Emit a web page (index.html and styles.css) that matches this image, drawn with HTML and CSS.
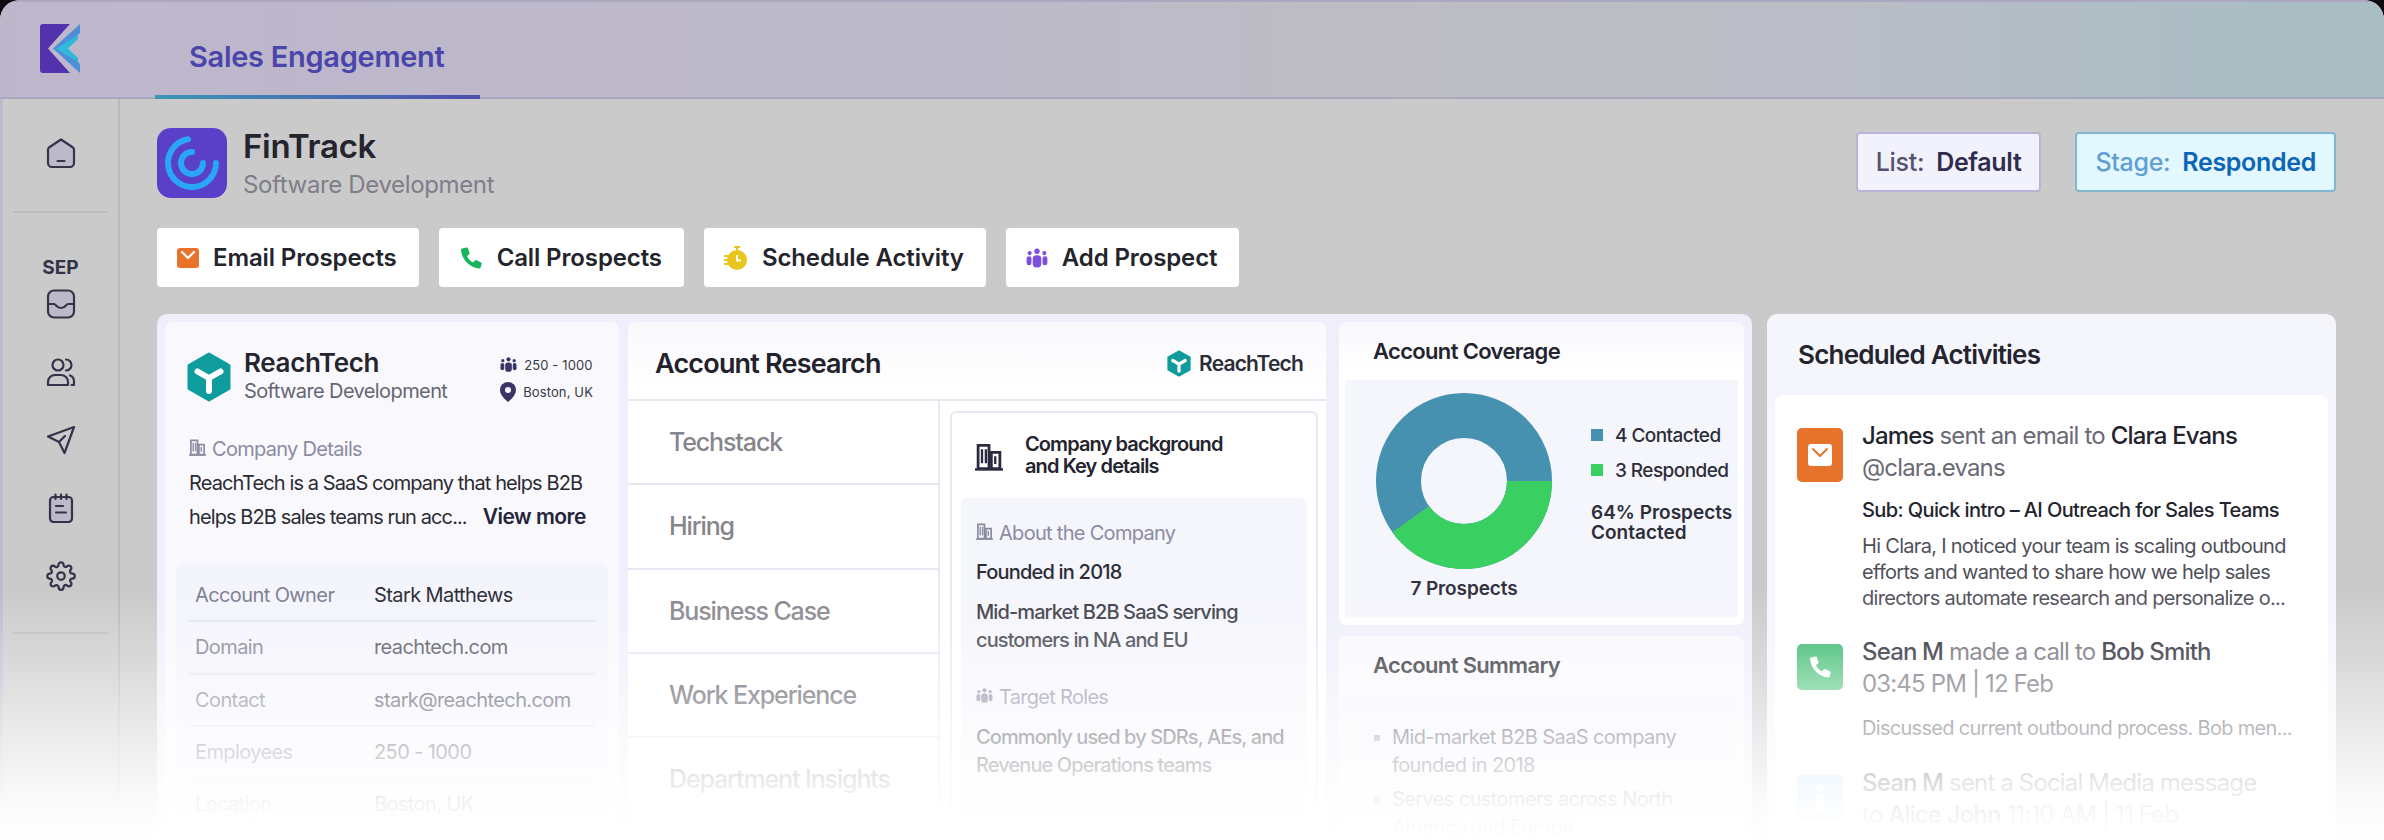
FILE: index.html
```html
<!DOCTYPE html>
<html lang="en">
<head>
<meta charset="utf-8">
<title>Sales Engagement</title>
<link rel="stylesheet" href="styles.css">
</head>
<body>
<svg class="defs" width="0" height="0">
  <symbol id="hex" viewBox="0 0 44 50">
    <polygon points="22,2 42,13.5 42,36.5 22,48 2,36.5 2,13.5" fill="#0f9c9c" stroke="#0f9c9c" stroke-width="3" stroke-linejoin="round"/>
    <path d="M22 26 10.5 19.5M22 26l11.5-6.500M22 26v13" stroke="#fff" stroke-width="6" stroke-linecap="round" fill="none"/>
  </symbol>
  <symbol id="bld" viewBox="0 0 18 18">
    <path d="M2 1.500h7v15H2zM10.500 6H16v10.500h-5.500z" fill="none" stroke="currentColor" stroke-width="1.800"/>
    <path d="M4.500 4v9M7 4v9M13 8.500v5" stroke="currentColor" stroke-width="1.500"/>
    <path d="M0 17h18" stroke="currentColor" stroke-width="1.600"/>
  </symbol>
  <symbol id="team" viewBox="0 0 18 18">
    <circle cx="9" cy="3.500" r="2.200"/><circle cx="3" cy="5" r="1.700"/><circle cx="15" cy="5" r="1.700"/>
    <rect x="5.500" y="6.800" width="7" height="10" rx="3"/><rect x="0.500" y="7.500" width="4" height="7.500" rx="2"/><rect x="13.500" y="7.500" width="4" height="7.500" rx="2"/>
  </symbol>
  <symbol id="mail" viewBox="0 0 22 20">
    <rect width="22" height="20" rx="3" fill="currentColor"/>
    <path d="M5 4l6 6 6-6" fill="none" stroke="#fff" stroke-width="2.200" stroke-linecap="round" stroke-linejoin="round"/>
  </symbol>
  <symbol id="phone" viewBox="0 0 24 24">
    <path d="M3 2.500 7.500 1.500c.8-.2 1.300.2 1.500.9l1.500 4.500c.2.700 0 1.200-.5 1.600L8 10c1.200 2.700 3.300 5 6 6.500l1.800-1.900c.5-.5 1.100-.6 1.700-.3l4.300 2c.7.300 1 .9.800 1.600l-1 3.600c-.2.700-.8 1.100-1.500 1C10.500 21.600 2.800 13.500 2 4c-.1-.7.300-1.300 1-1.500z"/>
  </symbol>
</svg>

<div class="app">
  <header class="topbar">
    <div class="brand">
      <svg class="logo" width="40" height="50" viewBox="0 0 40 50">
        <path d="M3 0h27L8 24.500 30 49H3a3 3 0 0 1-3-3V3a3 3 0 0 1 3-3z" fill="#5233ad"/>
        <path d="M40 0v9L24 24.500 40 40v9L13 24.500z" fill="#4b8fd6"/>
        <path d="M38 11v4L28 24.500 38 34v4L16 24.500z" fill="#2fb8da"/>
      </svg>
    </div>
    <div class="tab">Sales Engagement</div>
  </header>

  <div class="shell">
    <nav class="side">
      <svg class="nav-ico nav-home" viewBox="0 0 30 30" width="30" height="30"><path d="M15 1.500 27 9.500a3 3 0 0 1 1 2.300V25a4 4 0 0 1-4 4H6a4 4 0 0 1-4-4V11.800a3 3 0 0 1 1-2.300z" class="ico-fill"/><path d="M11.500 23h7" class="ico-line"/></svg>
      <div class="side-rule"></div>
      <div class="side-label">SEP</div>
      <svg class="nav-ico" viewBox="0 0 30 30" width="30" height="30"><rect x="2" y="1.500" width="26" height="27" rx="6" class="ico-fill"/><path d="M2 15h6c2 0 2.500 4 7 4s5-4 7-4h6" class="ico-line"/></svg>
      <svg class="nav-ico" viewBox="0 0 30 30" width="30" height="30"><circle cx="12" cy="8" r="5.500" class="ico-line"/><path d="M20 2.500a5.500 5.500 0 0 1 0 11M2 28v-3a7 7 0 0 1 7-7h6a7 7 0 0 1 7 7v3zM24 18.500c2.500.8 4 3 4 6V28h-2.500" class="ico-line"/></svg>
      <svg class="nav-ico" viewBox="0 0 30 30" width="30" height="30"><path d="M28 2 2 11.500l11 5.500 5.500 11zM13 17l6-6" class="ico-line"/></svg>
      <svg class="nav-ico" viewBox="0 0 30 30" width="30" height="30"><rect x="4" y="4" width="22" height="25" rx="3.500" class="ico-fill"/><path d="M9.500 1.500V6M15 1.500V6M20.500 1.500V6M10 13h7M10 19.500h10" class="ico-line"/></svg>
      <svg class="nav-ico" viewBox="0 0 24 24" width="30" height="30"><circle cx="12" cy="12" r="3" class="ico-thin"/><path class="ico-thin" d="M19.400 15a1.650 1.650 0 0 0 .33 1.820l.06.06a2 2 0 0 1 0 2.830 2 2 0 0 1-2.830 0l-.06-.06a1.650 1.650 0 0 0-1.820-.33 1.650 1.650 0 0 0-1 1.510V21a2 2 0 0 1-2 2 2 2 0 0 1-2-2v-.09A1.650 1.650 0 0 0 9 19.400a1.650 1.650 0 0 0-1.820.33l-.06.06a2 2 0 0 1-2.830 0 2 2 0 0 1 0-2.830l.06-.06a1.650 1.650 0 0 0 .33-1.820 1.650 1.650 0 0 0-1.510-1H3a2 2 0 0 1-2-2 2 2 0 0 1 2-2h.09A1.650 1.650 0 0 0 4.600 9a1.650 1.650 0 0 0-.33-1.820l-.06-.06a2 2 0 0 1 0-2.830 2 2 0 0 1 2.830 0l.06.06a1.650 1.650 0 0 0 1.820.33H9a1.650 1.650 0 0 0 1-1.510V3a2 2 0 0 1 2-2 2 2 0 0 1 2 2v.09a1.650 1.650 0 0 0 1 1.510 1.650 1.650 0 0 0 1.820-.33l.06-.06a2 2 0 0 1 2.830 0 2 2 0 0 1 0 2.830l-.06.06a1.650 1.650 0 0 0-.33 1.820V9a1.650 1.650 0 0 0 1.510 1H21a2 2 0 0 1 2 2 2 2 0 0 1-2 2h-.09a1.650 1.650 0 0 0-1.510 1z"/></svg>
      <div class="side-rule side-rule-low"></div>
    </nav>

    <main class="main">
      <div class="title-row">
        <svg width="70" height="70" viewBox="0 0 70 70"><rect width="70" height="70" rx="14" fill="#5a3fc8"/><path d="M31 11.300A24 24 0 1 0 59 35M35 24a11 11 0 1 0 11 11" fill="none" stroke="#2aa6f6" stroke-width="6" stroke-linecap="round"/></svg>
        <div class="title-text">
          <div class="title-name">FinTrack</div>
          <div class="title-sub">Software Development</div>
        </div>
        <div class="chips">
          <div class="chip"><span class="chip-k">List:</span><span class="chip-v">Default</span></div>
          <div class="chip chip-blue"><span class="chip-k">Stage:</span><span class="chip-v">Responded</span></div>
        </div>
      </div>

      <div class="actions">
        <div class="btn"><svg class="ico-mail" width="22" height="20"><use href="#mail"/></svg>Email Prospects</div>
        <div class="btn"><svg class="ico-phone" width="24" height="24"><use href="#phone"/></svg>Call Prospects</div>
        <div class="btn">
          <svg width="24" height="26" viewBox="0 0 24 26"><circle cx="13" cy="15" r="10" fill="#e8c51f"/><path d="M10 2h6M13 2v3M13 10v5.500h4" stroke="#e8c51f" stroke-width="2.200" fill="none"/><path d="M13 10v5.500h4" stroke="#fff" stroke-width="1.800" fill="none"/><path d="M0 11h4M0 15h3M0 19h4" stroke="#e8c51f" stroke-width="2"/></svg>
          Schedule Activity
        </div>
        <div class="btn"><svg class="ico-team" width="22" height="22"><use href="#team"/></svg>Add Prospect</div>
      </div>

      <div class="boards">
        <section class="board board-main">
          <article class="card company">
            <div class="co-head">
              <svg width="44" height="50"><use href="#hex"/></svg>
              <div class="co-name">
                <div class="co-title">ReachTech</div>
                <div class="co-sub">Software Development</div>
              </div>
              <div class="co-meta">
                <div class="meta-row"><svg class="ico-navy" width="17" height="17"><use href="#team"/></svg><span>250 - 1000</span></div>
                <div class="meta-row"><svg width="16" height="20" viewBox="0 0 16 20"><path d="M8 0a8 8 0 0 1 8 8c0 5-5 9.500-8 12C5 17.500 0 13 0 8a8 8 0 0 1 8-8z" fill="#3a3566"/><circle cx="8" cy="8" r="3" fill="#f8f8fd"/></svg><span>Boston, UK</span></div>
              </div>
            </div>
            <div class="label co-label"><svg width="17" height="17"><use href="#bld"/></svg>Company Details</div>
            <div class="co-desc">ReachTech is a SaaS company that helps B2B<br>helps B2B sales teams run acc...<b class="more">View more</b></div>
            <div class="facts">
              <div class="fact"><span class="fact-k">Account Owner</span><span class="fact-v strong">Stark Matthews</span></div>
              <div class="fact"><span class="fact-k">Domain</span><span class="fact-v">reachtech.com</span></div>
              <div class="fact"><span class="fact-k">Contact</span><span class="fact-v">stark@reachtech.com</span></div>
              <div class="fact"><span class="fact-k">Employees</span><span class="fact-v">250 - 1000</span></div>
              <div class="fact"><span class="fact-k">Location</span><span class="fact-v">Boston, UK</span></div>
            </div>
          </article>

          <article class="card research">
            <div class="res-head">
              <h2 class="res-title">Account Research</h2>
              <div class="res-brand"><svg width="24" height="27"><use href="#hex"/></svg>ReachTech</div>
            </div>
            <div class="res-body">
              <div class="res-tabs">
                <div class="res-tab">Techstack</div>
                <div class="res-tab">Hiring</div>
                <div class="res-tab">Business Case</div>
                <div class="res-tab res-tab-dark">Work Experience</div>
                <div class="res-tab">Department Insights</div>
              </div>
              <div class="res-pane">
                <div class="res-detail">
                  <div class="det-head">
                    <svg class="det-ico" width="30" height="28"><use href="#bld"/></svg>
                    <div class="det-title">Company background<br>and Key details</div>
                  </div>
                  <div class="det-panel">
                    <div class="label"><svg width="17" height="17"><use href="#bld"/></svg>About the Company</div>
                    <p class="det-one">Founded in 2018</p>
                    <p class="det-text">Mid-market B2B SaaS serving<br>customers in NA and EU</p>
                    <div class="label det-gap"><svg width="17" height="17"><use href="#team"/></svg>Target Roles</div>
                    <p class="det-text">Commonly used by SDRs, AEs, and<br>Revenue Operations teams</p>
                  </div>
                </div>
              </div>
            </div>
          </article>

          <div class="col">
            <article class="card coverage">
              <h3 class="col-title">Account Coverage</h3>
              <div class="cov-panel">
                <div class="cov-chart">
                  <svg width="176" height="176" viewBox="0 0 176 176">
                    <circle cx="88" cy="88" r="65.500" fill="none" stroke="#4690b0" stroke-width="45"/>
                    <path d="M153.500 88A65.500 65.500 0 0 1 34.700 126.100" fill="none" stroke="#3ad061" stroke-width="45"/>
                  </svg>
                  <div class="cov-total">7 Prospects</div>
                </div>
                <div class="cov-legend">
                  <div class="leg"><i class="sq sq-blue"></i>4 Contacted</div>
                  <div class="leg"><i class="sq sq-green"></i>3 Responded</div>
                  <div class="cov-stat">64% Prospects<br>Contacted</div>
                </div>
              </div>
            </article>
            <article class="card summary">
              <h3 class="col-title">Account Summary</h3>
              <ul class="sum-panel">
                <li class="sum-item"><span>Mid-market B2B SaaS company<br>founded in 2018</span></li>
                <li class="sum-item"><span>Serves customers across North<br>America and Europe</span></li>
              </ul>
            </article>
          </div>
        </section>

        <section class="board board-side">
          <h2 class="sch-title">Scheduled Activities</h2>
          <div class="sch-list">
            <div class="act">
              <div class="act-ico act-orange"><svg class="ico-white" width="24" height="22" viewBox="0 0 24 22"><rect width="24" height="22" rx="3" fill="#fff"/><path d="M5 5l7 7 7-7" fill="none" stroke="#e7722c" stroke-width="2" stroke-linecap="round" stroke-linejoin="round"/></svg></div>
              <div class="act-body">
                <div class="act-line"><b>James</b> sent an email to <b>Clara Evans</b><br>@clara.evans</div>
                <div class="act-sub">Sub: Quick intro – AI Outreach for Sales Teams</div>
                <div class="act-text">Hi Clara, I noticed your team is scaling outbound<br>efforts and wanted to share how we help sales<br>directors automate research and personalize o...</div>
              </div>
            </div>
            <div class="act">
              <div class="act-ico act-green"><svg class="ico-white" width="24" height="24"><use href="#phone"/></svg></div>
              <div class="act-body">
                <div class="act-line"><b>Sean M</b> made a call to <b>Bob Smith</b><br>03:45 PM | 12 Feb</div>
                <div class="act-text act-note">Discussed current outbound process. Bob men...</div>
              </div>
            </div>
            <div class="act">
              <div class="act-ico act-blue"><svg width="8" height="28" viewBox="0 0 8 28"><circle cx="4" cy="3.500" r="3.500" fill="#fff"/><rect y="10" width="8" height="18" rx="1.500" fill="#fff"/></svg></div>
              <div class="act-body">
                <div class="act-line"><b>Sean M</b> sent a Social Media message<br>to <b>Alice John</b> 11:10 AM | 11 Feb</div>
              </div>
            </div>
          </div>
        </section>
      </div>
    </main>
  </div>
  <div class="fade"></div>
</div>
</body>
</html>
```
FILE: styles.css
```css
* { box-sizing: border-box; }
html, body { margin: 0; height: 840px; overflow: hidden; background: #0b0b10; }
body { font-family: Inter, "Noto Sans", sans-serif; color: #25252f; letter-spacing: -0.02em; }
b { font-weight: inherit; }
h2, h3, p, ul { margin: 0; padding: 0; }
.defs { position: absolute; }

.app { position: relative; height: 840px; border-radius: 20px 20px 0 0; overflow: hidden; background: #cacaca; display: flex; flex-direction: column; }
.topbar { height: 99px; flex: none; display: flex; border-top: 2px solid #aba7bf; border-bottom: 2px solid #aaa8bd; background: linear-gradient(90deg, #bfb6cc 0%, #bcb9ca 35%, #bdbdc4 60%, #b9bdc6 78%, #adbdc5 92%, #a9bec3 100%); }
.brand { width: 155px; flex: none; padding: 22px 0 0 40px; }
.logo { display: block; }
.tab { width: 325px; height: 97px; margin-bottom: -1px; padding: 37px 0 0 34px; font-size: 29px; line-height: 36px; font-weight: 600; color: #4a45aa; letter-spacing: -0.01em; border-bottom: 4px solid; border-image: linear-gradient(90deg, #3b97b5, #4f4cad) 1; }

.shell { flex: 1; min-height: 0; display: flex; }
.side { width: 120px; flex: none; border-left: 3px solid #bdbbcc; border-right: 2px solid #bababa; display: flex; flex-direction: column; align-items: center; padding-top: 39px; }
.nav-ico { flex: none; display: block; margin-bottom: 38px; }
.nav-home { margin-bottom: 0; }
.ico-fill { fill: #bdb9c8; stroke: #33334a; stroke-width: 2.200; stroke-linejoin: round; }
.ico-line { fill: none; stroke: #33334a; stroke-width: 2.200; stroke-linecap: round; stroke-linejoin: round; }
.ico-thin { fill: none; stroke: #33334a; stroke-width: 1.800; }
.side-rule { width: 95px; height: 2px; background: #bcbcbc; margin-top: 43px; flex: none; }
.side-label { margin-top: 44px; height: 32px; font-size: 19px; line-height: 22px; font-weight: 700; color: #33334a; letter-spacing: 0; }
.side-rule-low { margin-top: 3px; }

.main { flex: 1; min-width: 0; padding: 29px 48px 0 37px; display: flex; flex-direction: column; }
.title-row { display: flex; height: 70px; flex: none; }
.title-text { margin-left: 16px; }
.title-name { font-size: 33px; line-height: 36px; font-weight: 600; color: #24242f; }
.title-sub { margin-top: 7px; font-size: 24px; line-height: 28px; color: #7e7e88; letter-spacing: -0.015em; }
.chips { margin-left: auto; display: flex; gap: 34px; margin-top: 4px; height: 60px; }
.chip { display: flex; align-items: center; gap: 12px; padding: 0 18px; height: 60px; border: 2px solid #b9b4d4; border-radius: 4px; background: #f2f2fd; font-size: 25px; font-weight: 500; }
.chip-k { color: #55536f; }
.chip-v { color: #2f2c4d; font-weight: 600; }
.chip-blue { background: #e3f7fe; border-color: #82b6d0; }
.chip-blue .chip-k { color: #5f9fd2; }
.chip-blue .chip-v { color: #0d66b4; }

.actions { display: flex; gap: 20px; margin-top: 30px; flex: none; }
.btn { height: 59px; display: flex; align-items: center; gap: 14px; padding: 0 22px 0 20px; background: #fff; border-radius: 4px; font-size: 24px; font-weight: 600; color: #24242c; letter-spacing: -0.005em; white-space: nowrap; }
.ico-mail { color: #e9722a; }
.ico-phone { fill: #17b45a; }
.ico-team { fill: #7c4ee0; }
.ico-navy { fill: #3a3566; }
.ico-white { fill: #fff; }

.boards { flex: 1; min-height: 0; margin-top: 27px; display: flex; gap: 15px; }
.board { border-radius: 10px 10px 0 0; background: #efeffb; }
.board-main { width: 1595px; flex: none; padding: 8px 8px 0 8px; display: flex; }
.card { background: linear-gradient(180deg, #f8f8fd 0, #fff 100px); border-radius: 8px; }

.company { width: 454px; flex: none; background: #f9f9fd; padding: 30px 11px 0 11px; margin-right: 9px; }
.co-head { display: flex; padding-left: 11px; height: 50px; }
.co-name { margin-left: 13px; }
.co-title { font-size: 26px; line-height: 30px; margin-top: -4px; font-weight: 600; color: #25252f; }
.co-sub { margin-top: 1px; font-size: 20px; line-height: 24px; color: #666672; letter-spacing: -0.03em; white-space: nowrap; }
.co-meta { margin-left: auto; padding-right: 15px; font-size: 13px; color: #383845; letter-spacing: 0.01em; }
.meta-row { display: flex; align-items: center; gap: 7px; height: 30px; line-height: 20px; margin-top: -5px; padding-top: 5px; }
.meta-row + .meta-row { margin-top: 0; padding-top: 0; }
.meta-row svg { flex: none; }

.label { display: flex; align-items: center; gap: 6px; height: 24px; font-size: 20px; line-height: 24px; color: #8b8ba2; letter-spacing: -0.035em; white-space: nowrap; }
.label svg { flex: none; margin-top: -3px; color: #8b8ba2; fill: #8b8ba2; }
.co-label { margin: 35px 0 0 13px; }
.co-desc { margin: 6px 0 0 13px; font-size: 20px; line-height: 33px; color: #2b2b33; letter-spacing: -0.045em; white-space: nowrap; }
.more { margin-left: 16px; font-size: 21px; font-weight: 600; color: #25253a; letter-spacing: -0.025em; }
.facts { margin-top: 29px; padding: 7px 13px 0; background: #f4f5fc; border-radius: 8px 8px 0 0; height: 300px; }
.fact { display: flex; height: 52.300px; align-items: center; border-bottom: 2px solid #e6e7f0; padding-left: 6px; font-size: 20px; letter-spacing: -0.03em; white-space: nowrap; }
.fact-k { width: 179px; flex: none; color: #7e7e92; }
.fact-v { color: #4f4f5c; }
.fact-v.strong { color: #2b2b36; }

.research { width: 698px; flex: none; background: linear-gradient(180deg, #f9f9fd 0, #fff 70px); display: flex; flex-direction: column; }
.res-head { height: 79px; flex: none; display: flex; align-items: center; padding: 6px 23px 0 27px; border-bottom: 2px solid #e6e7f1; }
.res-title { font-size: 27px; line-height: 32px; font-weight: 600; color: #22222c; letter-spacing: -0.03em; }
.res-brand { margin-left: auto; display: flex; align-items: center; gap: 8px; font-size: 21px; font-weight: 600; color: #2d2d38; letter-spacing: -0.04em; }
.res-body { flex: 1; min-height: 0; display: flex; }
.res-tabs { width: 312px; flex: none; border-right: 2px solid #e9e9f3; }
.res-tab { height: 84.300px; display: flex; align-items: center; padding-left: 41px; border-bottom: 2px solid #e6e7f1; font-size: 25px; font-weight: 500; color: #85858c; letter-spacing: -0.045em; }
.res-tab-dark { color: #55555e; }
.res-pane { flex: 1; padding: 10px 8px 0 10px; min-width: 0; }
.res-detail { border: 2px solid #e8e8f4; border-bottom: 0; border-radius: 6px 6px 0 0; padding: 0 9px; height: 500px; background: #fff; }
.det-head { display: flex; height: 85px; padding: 20px 0 0 13px; }
.det-ico { color: #2b2b40; fill: #2b2b40; margin-top: 10px; flex: none; }
.det-title { margin-left: 21px; font-size: 20px; line-height: 22px; font-weight: 600; color: #24242e; letter-spacing: -0.045em; }
.det-panel { padding: 23px 15px 0; background: #f5f6fc; border-radius: 6px 6px 0 0; height: 400px; }
.det-one { margin-top: 15px; font-size: 20px; line-height: 24px; font-weight: 500; color: #2c2c36; letter-spacing: -0.04em; }
.det-text { margin-top: 14px; font-size: 20px; line-height: 28px; font-weight: 500; color: #3b3b46; letter-spacing: -0.045em; white-space: nowrap; }
.det-gap { margin-top: 31px; }

.col { flex: 1; min-width: 0; margin-left: 13px; display: flex; flex-direction: column; gap: 11px; }
.col-title { padding: 17px 0 0 28px; height: 58px; font-size: 22px; line-height: 24px; font-weight: 600; color: #24242e; letter-spacing: -0.03em; }
.coverage { padding: 0 6px; height: 303px; flex: none; background: linear-gradient(180deg, #f8f8fd 0, #fff 50px); }
.cov-panel { height: 237px; background: #f5f6fc; border-radius: 4px; display: flex; padding: 13px 0 0 31px; }
.cov-chart svg { display: block; }
.cov-total { margin-top: 8px; text-align: center; font-size: 19px; line-height: 24px; font-weight: 600; color: #32323f; letter-spacing: -0.005em; }
.cov-legend { margin-left: 39px; padding-top: 30px; }
.leg { display: flex; align-items: center; gap: 12px; height: 24px; margin-bottom: 11px; font-size: 19px; font-weight: 500; color: #2e2e3a; letter-spacing: -0.03em; white-space: nowrap; }
.sq { width: 12px; height: 12px; flex: none; }
.sq-blue { background: #4690b0; }
.sq-green { background: #3ad061; }
.cov-stat { margin-top: 21px; font-size: 19px; line-height: 20px; font-weight: 600; color: #2e2e3a; letter-spacing: 0; white-space: nowrap; }
.summary { flex: 1; min-height: 0; padding: 0 6px; background: #f9f9fd; }
.sum-panel { list-style: none; height: 180px; padding: 29px 0 0 29px; background: #f5f6fc; border-radius: 4px; }
.sum-item { display: flex; gap: 12px; margin-bottom: 6px; font-size: 20px; line-height: 28px; color: #4d4d5c; letter-spacing: -0.03em; white-space: nowrap; }
.sum-item::before { content: ""; width: 6px; height: 6px; margin-top: 12px; flex: none; background: #9c9cc0; }

.board-side { flex: 1; min-width: 0; padding: 0 8px; background: #f5f6fc; }
.sch-title { height: 81px; padding: 25px 0 0 23px; font-size: 26px; line-height: 32px; font-weight: 600; color: #24242e; letter-spacing: -0.03em; }
.sch-list { background: #fff; border-radius: 8px 8px 0 0; padding: 25px 0 0 22px; height: 460px; }
.act { display: flex; gap: 19px; margin-bottom: 25px; }
.act + .act + .act { margin-top: 26px; }
.act-ico { width: 46px; height: 54px; height: 46px; margin-top: 8px; flex: none; border-radius: 5px; display: flex; align-items: center; justify-content: center; }
.act-orange { background: #e7722c; height: 54px; }
.act-green { background: linear-gradient(180deg, #34b767, #58c884); height: 46px; }
.act-blue { background: #bcdcfa; height: 46px; }
.act-body { min-width: 0; }
.act-line { font-size: 24px; line-height: 32px; color: #6a6a74; letter-spacing: -0.035em; white-space: nowrap; }
.act-line b { font-weight: 500; color: #23232d; }
.act-sub { margin-top: 13px; font-size: 20px; line-height: 26px; font-weight: 500; color: #23232d; letter-spacing: -0.03em; white-space: nowrap; }
.act-text { margin-top: 10px; font-size: 20px; line-height: 26px; color: #4f4f5a; letter-spacing: -0.035em; white-space: nowrap; }
.act-note { margin-top: 15px; }

.fade { position: absolute; left: 0; right: 0; bottom: 0; height: 250px; pointer-events: none; background: linear-gradient(180deg, rgba(255,255,255,0) 0%, rgba(255,255,255,0.25) 25%, rgba(255,255,255,0.6) 55%, rgba(255,255,255,0.92) 85%, #fff 100%); }
```
